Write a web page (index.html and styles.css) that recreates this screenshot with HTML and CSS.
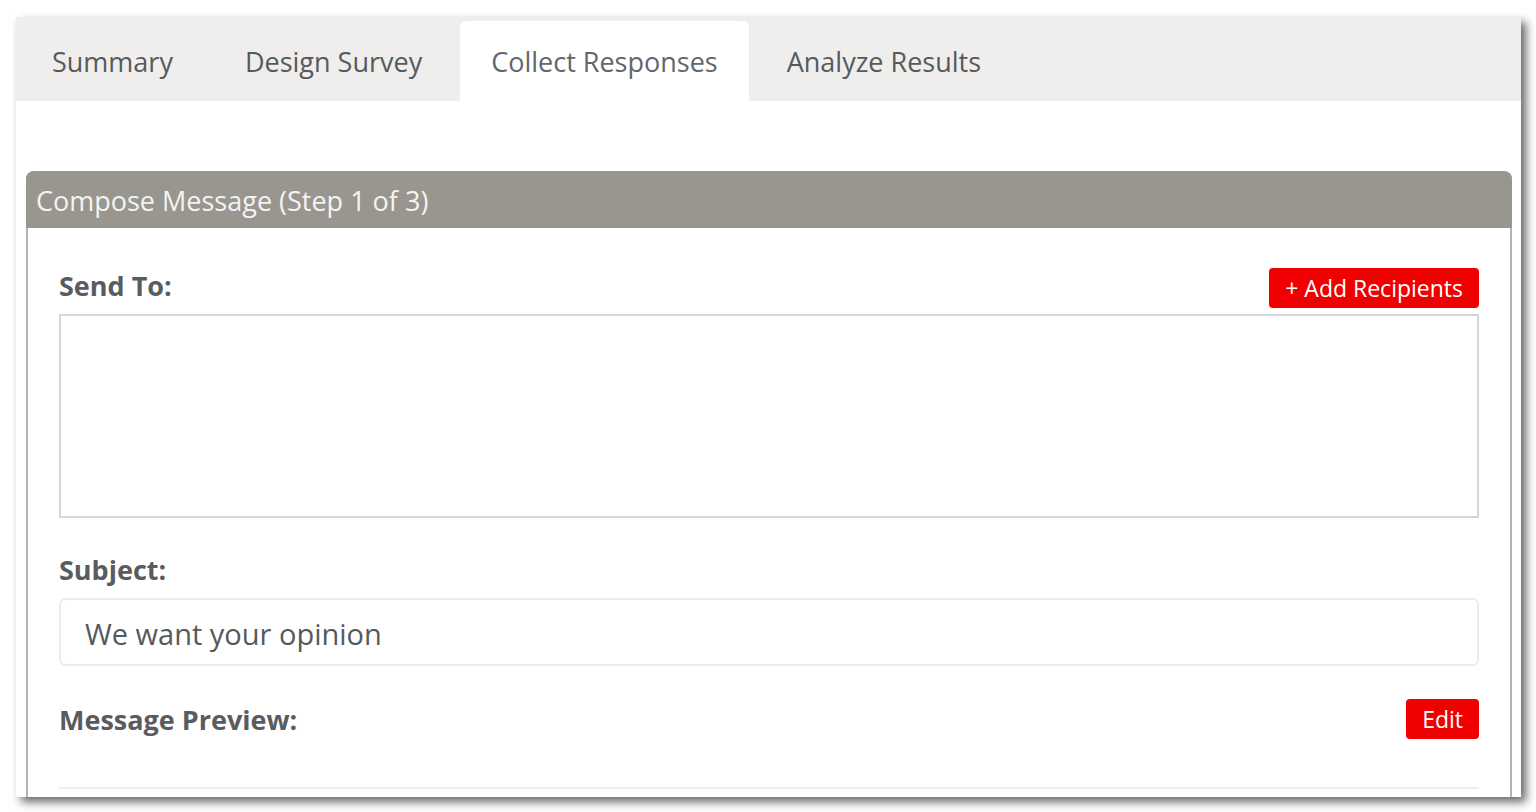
FILE: index.html
```html
<!DOCTYPE html>
<html lang="en">
<head>
<meta charset="utf-8">
<title>Collect Responses</title>
<link rel="stylesheet" href="styles.css">
</head>
<body>
<div class="frame">
  <nav class="tabs">
    <div class="tab">Summary</div>
    <div class="tab">Design Survey</div>
    <div class="tab active">Collect Responses</div>
    <div class="tab">Analyze Results</div>
  </nav>
  <section class="panel">
    <header class="panel-head">Compose Message (Step 1 of 3)</header>
    <div class="panel-body">
      <div class="row">
        <span class="label send-label">Send To:</span>
        <button class="btn">+ Add Recipients</button>
      </div>
      <div class="recipients"></div>
      <div class="label subject-label">Subject:</div>
      <div class="subject">We want your opinion</div>
      <div class="row preview-row">
        <span class="label">Message Preview:</span>
        <button class="btn">Edit</button>
      </div>
      <div class="preview"></div>
    </div>
  </section>
</div>
</body>
</html>
```

FILE: styles.css
```css
html, body {
  margin: 0;
  padding: 0;
  background: #ffffff;
}
body {
  font-family: "Open Sans", "Liberation Sans", sans-serif;
  width: 1536px;
  height: 812px;
  overflow: hidden;
}
.frame {
  margin: 17px 0 0 16px;
  width: 1505px;
  height: 780px;
  background: #ffffff;
  overflow: hidden;
  box-shadow: 5px 5px 9px rgba(0, 0, 0, 0.6);
}
.tabs {
  display: flex;
  height: 84px;
  padding-top: 4px;
  box-sizing: border-box;
  background: #efeeec;
}
.tab {
  display: flex;
  align-items: center;
  padding: 0 36px;
  font-size: 27px;
  color: #565a5e;
  white-space: nowrap;
}
.tab.active {
  background: #ffffff;
  border-radius: 6px 6px 0 0;
  padding: 0 31px;
  margin: 0 2px;
  color: #63666a;
}
.panel {
  margin: 70px 0 0 10px;
  width: 1486px;
  box-sizing: border-box;
  border-left: 2px solid #b3b3b3;
  border-right: 2px solid #b3b3b3;
  border-radius: 8px 8px 0 0;
}
.panel-head {
  height: 57px;
  margin: 0 -2px;
  padding: 2px 0 0 10px;
  box-sizing: border-box;
  background: #99968f;
  border-radius: 8px 8px 0 0;
  color: #f3f4f2;
  font-size: 27px;
  display: flex;
  align-items: center;
}
.panel-body {
  padding: 40px 31px 0 31px;
}
.row {
  display: flex;
  align-items: center;
  justify-content: space-between;
  height: 40px;
}
.label {
  font-weight: 700;
  font-size: 27px;
  color: #595c5f;
}
.send-label {
  margin-bottom: 5px;
}
.btn {
  height: 40px;
  padding: 0 16px;
  border: none;
  border-radius: 4px;
  background: #f00000;
  color: #ffffff;
  font-family: "Open Sans", "Liberation Sans", sans-serif;
  font-size: 23px;
}
.recipients {
  margin-top: 6px;
  height: 204px;
  box-sizing: border-box;
  border: 2px solid #d6d6d6;
}
.subject-label {
  margin-top: 35px;
  line-height: 34px;
}
.subject {
  margin-top: 11px;
  height: 68px;
  box-sizing: border-box;
  border: 2px solid #ececec;
  border-radius: 6px;
  padding: 3px 0 0 24px;
  display: flex;
  align-items: center;
  font-size: 29px;
  color: #55595c;
}
.preview-row {
  margin-top: 33px;
}
.preview {
  margin-top: 48px;
  border-top: 2px solid #eeeeee;
  height: 40px;
}
```
